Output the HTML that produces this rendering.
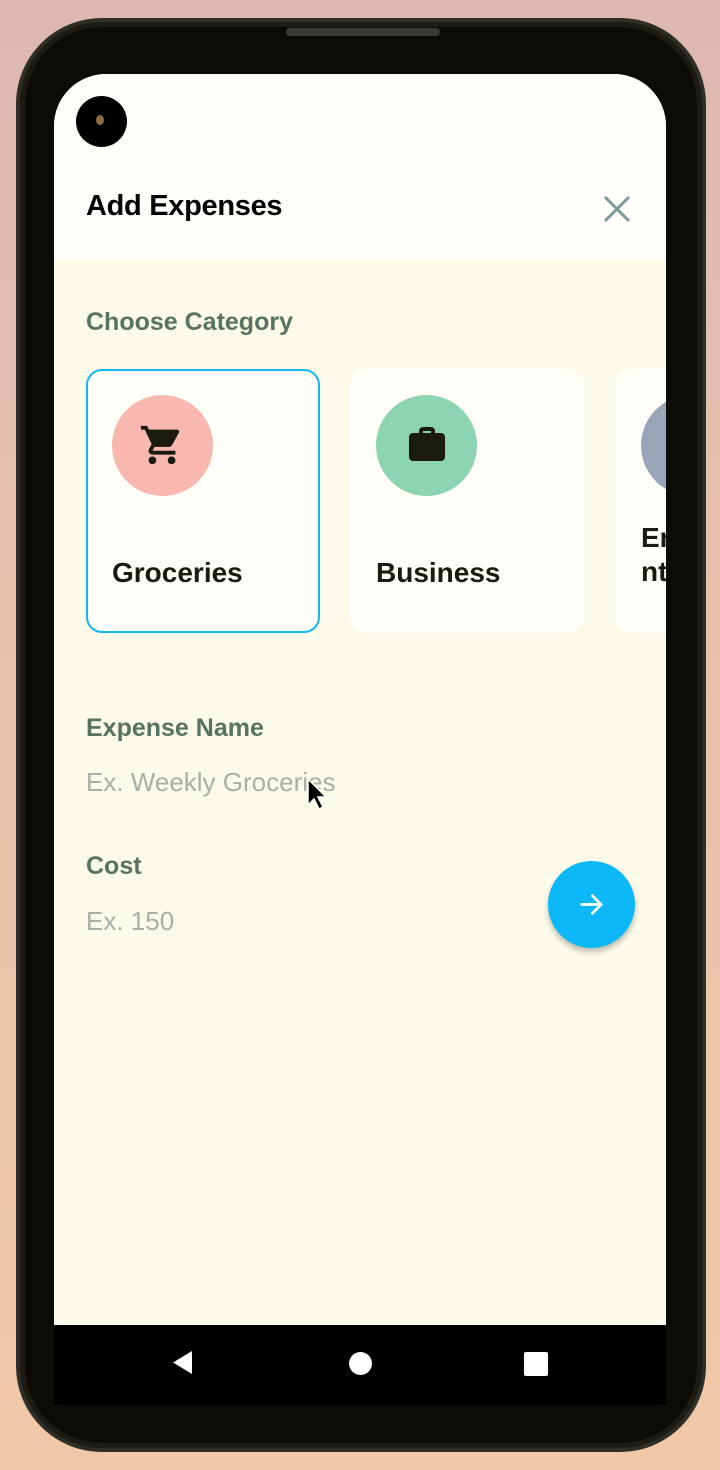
<!DOCTYPE html>
<html><head><meta charset="utf-8"><style>
*{margin:0;padding:0;box-sizing:border-box}
body{width:720px;height:1470px;overflow:hidden;background:linear-gradient(180deg,#dcb8b0 0%,#e8c4ac 50%,#f0c8a8 100%);font-family:"Liberation Sans",sans-serif;position:relative}
.phone{position:absolute;left:16px;top:18px;width:690px;height:1434px;background:#0c0c06;border-radius:86px;border:4px solid #2e2e26;box-shadow:inset 0 0 0 5px #1c1c14}
.speaker{position:absolute;left:266px;top:6px;width:154px;height:8px;background:#3a3a34;border-radius:4px}
.screen{position:absolute;left:54px;top:74px;width:612px;height:1251px;background:#fcfae8;border-radius:52px 52px 0 0;overflow:hidden}
.hdr{position:absolute;left:0;top:0;width:612px;height:184px;background:#fffef9}
.cam{position:absolute;left:22px;top:22px;width:51px;height:51px;border-radius:50%;background:#000}
.cam:after{content:"";position:absolute;left:20px;top:19px;width:8px;height:10px;border-radius:50%;background:#8a6a3a}
h1{position:absolute;left:32px;top:116px;font-size:29px;font-weight:bold;color:#000;letter-spacing:-0.3px}
.x{position:absolute;left:548px;top:120px}
.lbl{position:absolute;left:32px;font-size:25px;font-weight:bold;color:#587264}
.ph{position:absolute;left:32px;font-size:26px;color:#a8b0a8}
.card{position:absolute;top:295px;width:234px;height:264px;background:#fffef8;border-radius:16px}
.circ{position:absolute;left:26px;top:26px;width:101px;height:101px;border-radius:50%}
.cname{position:absolute;left:26px;top:188px;font-size:28px;font-weight:bold;color:#1a1a10}
.nav{position:absolute;left:54px;top:1325px;width:612px;height:80px;background:#000}
.fab{position:absolute;left:548px;top:861px;width:87px;height:87px;border-radius:50%;background:#0cb8f8;box-shadow:0 4px 6px rgba(0,0,0,0.25)}
</style></head><body>
<div class="phone"><div class="speaker"></div></div>
<div class="screen">
 <div class="hdr"></div>
 <div class="cam"></div>
 <h1>Add Expenses</h1>
 <svg class="x" width="30" height="30" viewBox="0 0 30 30"><path d="M3 3L27 27M27 3L3 27" stroke="#7c9a9a" stroke-width="3"/></svg>
 <div class="lbl" style="top:234px">Choose Category</div>
 <div class="card" style="left:32px;border:2px solid #14b8ee">
  <div class="circ" style="background:#f8b8b0;left:24px;top:24px"><svg style="position:absolute;left:27px;top:27px" width="46" height="46" viewBox="0 0 24 24"><path fill="#1a1a10" d="M7 18c-1.1 0-2 .9-2 2s.9 2 2 2 2-.9 2-2-.9-2-2-2zM1 2v2h2l3.6 7.59-1.35 2.45c-.16.28-.25.61-.25.96 0 1.1.9 2 2 2h12v-2H7.42c-.14 0-.25-.11-.25-.25l.03-.12.9-1.63h7.45c.75 0 1.41-.41 1.75-1.03l3.58-6.49A1 1 0 0 0 20 4H5.21l-.94-2H1zm16 16c-1.1 0-2 .9-2 2s.9 2 2 2 2-.9 2-2-.9-2-2-2z"/></svg></div>
  <div class="cname" style="left:24px;top:186px">Groceries</div>
 </div>
 <div class="card" style="left:296px">
  <div class="circ" style="background:#8cd4b2"><svg style="position:absolute;left:27px;top:26px" width="48" height="48" viewBox="0 0 24 24"><path fill="#1a1a10" d="M10 3h4a2 2 0 0 1 2 2v1h3a2 2 0 0 1 2 2v10a2 2 0 0 1-2 2H5a2 2 0 0 1-2-2V8a2 2 0 0 1 2-2h3V5a2 2 0 0 1 2-2zm0 2v1h4V5h-4z"/></svg></div>
  <div class="cname">Business</div>
 </div>
 <div class="card" style="left:561px">
  <div class="circ" style="background:#98a4b8"></div>
  <div class="cname" style="line-height:34px;top:152px">En<br>nt</div>
 </div>
 <div class="lbl" style="top:640px">Expense Name</div>
 <div class="ph" style="top:693px">Ex. Weekly Groceries</div>
 <div class="lbl" style="top:778px">Cost</div>
 <div class="ph" style="top:832px">Ex. 150</div>
</div>
<div class="fab"><svg style="position:absolute;left:29px;top:29px" width="29" height="29" viewBox="0 0 24 24"><path d="M3 12h17M12 4l8 8-8 8" stroke="#fff" stroke-width="2.2" fill="none"/></svg></div>
<svg style="position:absolute;left:302px;top:775px" width="30" height="40" viewBox="0 0 30 40"><path d="M6 4v26l6-6 5 10 4-2-5-10h8z" fill="#000" stroke="#fff" stroke-width="1.5"/></svg>
<div class="nav"></div>
<svg style="position:absolute;left:170px;top:1350px" width="25" height="25"><path d="M22 1v23L3 12.5z" fill="#fff"/></svg>
<div style="position:absolute;left:349px;top:1352px;width:23px;height:23px;border-radius:50%;background:#fff"></div>
<div style="position:absolute;left:524px;top:1352px;width:24px;height:24px;border-radius:2px;background:#fff"></div>
</body></html>
